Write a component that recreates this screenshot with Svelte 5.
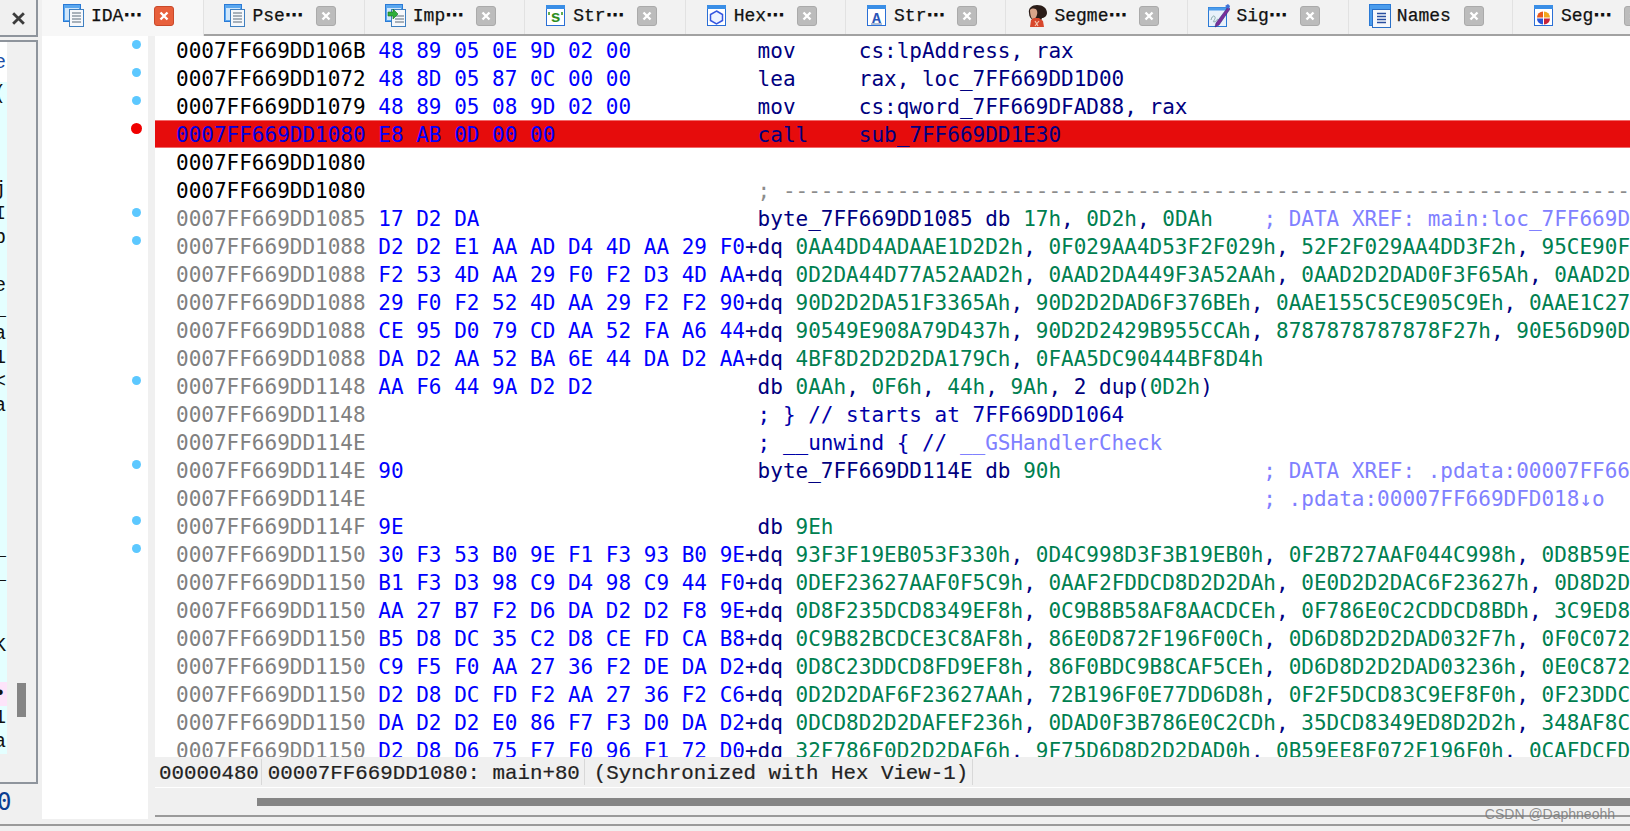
<script>
  const tabs = [
    { t: 'IDA', more: true, icon: 'doc', active: true },
    { t: 'Pse', more: true, icon: 'doc' },
    { t: 'Imp', more: true, icon: 'imp' },
    { t: 'Str', more: true, icon: 'sq' },
    { t: 'Hex', more: true, icon: 'hex' },
    { t: 'Str', more: true, icon: 'a' },
    { t: 'Segme', more: true, icon: 'face' },
    { t: 'Sig', more: true, icon: 'pen' },
    { t: 'Names', more: false, icon: 'names' },
    { t: 'Seg', more: true, icon: 'pie' }
  ];

  const P = '0007FF669DD';
  const INSTR_W = 40;

  function vals(s) {
    return s.split(/(, )/).map((x) => (x === ', ' ? ['n', x] : ['v', x]));
  }
  function row(addr, dark, bytes, parts, comment, mark) {
    const len = parts.reduce((a, p) => a + p[1].length, 0);
    const segs = [
      [dark ? 'k' : 'g', P + addr + ' '],
      ['b', bytes.padEnd(30).slice(0, 29)],
      ['n', bytes.length > 29 ? '+' : ' '],
      ...parts
    ];
    if (comment) segs.push(['c', ' '.repeat(Math.max(0, INSTR_W - len)) + comment]);
    return { segs, mark };
  }
  function dq(addr, bytes, s) {
    return row(addr, false, bytes + '+', [['n', 'dq '], ...vals(s)], null, null);
  }

  const rows = [
    row('106B', true, '48 89 05 0E 9D 02 00', [['n', 'mov     cs:lpAddress, rax']], null, 'blue'),
    row('1072', true, '48 8D 05 87 0C 00 00', [['n', 'lea     rax, loc_7FF669DD1D00']], null, 'blue'),
    row('1079', true, '48 89 05 08 9D 02 00', [['n', 'mov     cs:qword_7FF669DFAD88, rax']], null, 'blue'),
    { ...row('1080', false, 'E8 AB 0D 00 00', [['n', 'call    sub_7FF669DD1E30']], null, 'red'), hit: true },
    row('1080', true, '', []),
    row('1080', true, '', [['d', '; ' + '-'.repeat(70)]]),
    row('1085', false, '17 D2 DA', [['n', 'byte_7FF669DD1085 db '], ...vals('17h, 0D2h, 0DAh')], '; DATA XREF: main:loc_7FF669D', 'blue'),
    { ...dq('1088', 'D2 D2 E1 AA AD D4 4D AA 29 F0', '0AA4DD4ADAAE1D2D2h, 0F029AA4D53F2F029h, 52F2F029AA4DD3F2h, 95CE90F'), mark: 'blue' },
    dq('1088', 'F2 53 4D AA 29 F0 F2 D3 4D AA', '0D2DA44D77A52AAD2h, 0AAD2DA449F3A52AAh, 0AAD2D2DAD0F3F65Ah, 0AAD2D'),
    dq('1088', '29 F0 F2 52 4D AA 29 F2 F2 90', '90D2D2DA51F3365Ah, 90D2D2DAD6F376BEh, 0AAE155C5CE905C9Eh, 0AAE1C27'),
    dq('1088', 'CE 95 D0 79 CD AA 52 FA A6 44', '90549E908A79D437h, 90D2D2429B955CCAh, 8787878787878F27h, 90E56D90D'),
    dq('1088', 'DA D2 AA 52 BA 6E 44 DA D2 AA', '4BF8D2D2D2DA179Ch, 0FAA5DC90444BF8D4h'),
    row('1148', false, 'AA F6 44 9A D2 D2', [['n', 'db '], ...vals('0AAh, 0F6h, 44h, 9Ah'), ['n', ', 2 dup('], ['v', '0D2h'], ['n', ')']], null, 'blue'),
    row('1148', false, '', [['i', '; } // starts at 7FF669DD1064']]),
    row('114E', false, '', [['i', '; __unwind { // '], ['c', '__GSHandlerCheck']]),
    row('114E', false, '90', [['n', 'byte_7FF669DD114E db '], ['v', '90h']], '; DATA XREF: .pdata:00007FF66', 'blue'),
    row('114E', false, '', [], '; .pdata:00007FF669DFD018↓o'),
    row('114F', false, '9E', [['n', 'db '], ['v', '9Eh']], null, 'blue'),
    { ...dq('1150', '30 F3 53 B0 9E F1 F3 93 B0 9E', '93F3F19EB053F330h, 0D4C998D3F3B19EB0h, 0F2B727AAF044C998h, 0D8B59E'), mark: 'blue' },
    dq('1150', 'B1 F3 D3 98 C9 D4 98 C9 44 F0', '0DEF23627AAF0F5C9h, 0AAF2FDDCD8D2D2DAh, 0E0D2D2DAC6F23627h, 0D8D2D'),
    dq('1150', 'AA 27 B7 F2 D6 DA D2 D2 F8 9E', '0D8F235DCD8349EF8h, 0C9B8B58AF8AACDCEh, 0F786E0C2CDDCD8BDh, 3C9ED8'),
    dq('1150', 'B5 D8 DC 35 C2 D8 CE FD CA B8', '0C9B82BCDCE3C8AF8h, 86E0D872F196F00Ch, 0D6D8D2D2DAD032F7h, 0F0C072'),
    dq('1150', 'C9 F5 F0 AA 27 36 F2 DE DA D2', '0D8C23DDCD8FD9EF8h, 86F0BDC9B8CAF5CEh, 0D6D8D2D2DAD03236h, 0E0C872'),
    dq('1150', 'D2 D8 DC FD F2 AA 27 36 F2 C6', '0D2D2DAF6F23627AAh, 72B196F0E77DD6D8h, 0F2F5DCD83C9EF8F0h, 0F23DDC'),
    dq('1150', 'DA D2 D2 E0 86 F7 F3 D0 DA D2', '0DCD8D2D2DAFEF236h, 0DAD0F3B786E0C2CDh, 35DCD8349ED8D2D2h, 348AF8C'),
    dq('1150', 'D2 D8 D6 75 F7 F0 96 F1 72 D0', '32F786F0D2D2DAF6h, 9F75D6D8D2D2DAD0h, 0B59EE8F072F196F0h, 0CAFDCFD')
  ];

  const sideLines = ['(', '', '', '', 'j', 'I', 'b', '', 'e', '_', 'a', '1', '<', 'a', '', '', '', '', '', '_', '_', '', '', 'K', '', '•', '1', 'a'];
</script>

{#snippet win()}
  <rect x="1.5" y="1.5" width="18" height="20" fill="#fff" stroke="#2a6fd6" />
  <rect x="1" y="1" width="19" height="4" fill="#3a8ee6" />
{/snippet}

{#snippet doc()}
  <rect x="0.5" y="0.5" width="17" height="17" fill="#5aa7ef" stroke="#2a7ad6" />
  <rect x="2" y="4" width="14" height="12" fill="#cfe6fb" />
  <rect x="6.5" y="5.5" width="14" height="17" fill="#f6f8fb" stroke="#3f7fc0" />
{/snippet}

{#snippet icon(kind)}
  <svg class="ic" viewBox="0 0 22 24" aria-hidden="true">
    {#if kind === 'doc'}
      {@render doc()}
      <path d="M9 9h9M9 12h9M9 15h9M9 18h9" stroke="#5b6b7a" stroke-width="1.2" />
    {:else if kind === 'imp'}
      {@render doc()}
      <path d="M10 12h9M10 15h9M10 18h9" stroke="#5b6b7a" stroke-width="1.2" />
      <path d="M3 8h5V5l5 5-5 5v-3H3z" fill="#2fae3a" stroke="#176f20" stroke-width=".6" />
    {:else if kind === 'sq'}
      {@render win()}
      <text x="10.5" y="18" class="gl s">s</text>
      <path d="M4 8v3M17 8v3" stroke="#3f9a2a" stroke-width="1.6" />
    {:else if kind === 'hex'}
      {@render win()}
      <path d="M10.5 7l6 3.5v6l-6 3.5-6-3.5v-6z" fill="#eef3ff" stroke="#3456e0" stroke-width="1.5" />
    {:else if kind === 'a'}
      {@render win()}
      <text x="10.5" y="18.5" class="gl ga">A</text>
      <path d="M5 20h11" stroke="#5577aa" />
    {:else if kind === 'face'}
      <path d="M3 9c-1-5 3-8 8-8 6 0 10 3 10 8 0 3-3 5-5 5l-1 3H8C5 15 3 13 3 9z" fill="#2a1c18" />
      <path d="M4 6c2-2 6-2 7 1 1 3-1 8-4 8-2 0-3-5-3-9z" fill="#d9a58a" />
      <path d="M5 16l3-2h5l4 3 1 6H4z" fill="#d8472c" />
      <path d="M9 17l3 5M13 17l-4 5" stroke="#f3c7b0" stroke-width="1.2" />
    {:else if kind === 'pen'}
      <rect x="0.5" y="3.5" width="18" height="19" fill="#e8f1fb" stroke="#2a7ad6" />
      <rect x="0.5" y="3.5" width="18" height="3" fill="#4b9cec" />
      <path d="M3 16c1-4 3-5 4-3s-3 5-1 5 3-3 4-3" fill="none" stroke="#8aa" stroke-width="1" />
      <path d="M8 19L20 3l2 2L11 21l-4 2z" fill="#7a2f9a" stroke="#3a2a7a" stroke-width=".6" />
      <path d="M17 2l4 3 1-3-2-2z" fill="#3f6fd6" />
    {:else if kind === 'names'}
      <rect x="0.5" y="0.5" width="21" height="21" fill="#4b9cec" stroke="#2a7ad6" />
      <rect x="3.5" y="5.5" width="18" height="18" fill="#f6f8fb" stroke="#2a6fc6" />
      <path d="M8 9.5h9M8 12.5h9M8 15.5h9M8 18.5h9" stroke="#2a4fa0" stroke-width="1.3" />
    {:else}
      {@render win()}
      <path d="M10 7.5a6 6 0 0 0-6 6h6z" fill="#e8581c" />
      <path d="M11 7.5a6 6 0 0 1 6 6h-6z" fill="#f2a81e" />
      <path d="M10 14.5h-6a6 6 0 0 0 6 6z" fill="#2a55d8" />
      <path d="M11 14.5h6a6 6 0 0 1-6 6z" fill="#c8233a" />
    {/if}
  </svg>
{/snippet}

<div class="app">
  <div class="main">
    <aside class="side">
      <div class="closebox"><svg class="x" viewBox="0 0 14 14" aria-hidden="true"><path d="M2 2l10 10M12 2L2 12" stroke="#3c3c3c" stroke-width="2.6" /></svg></div>
      <div class="pane">
        <div class="lines">
          <div class="first"><span>e</span></div>
          <div class="cyan">
            {#each sideLines as l, i}
              <div class="sl" class:pink={i === 25}><span>{l}</span></div>
            {/each}
          </div>
        </div>
        <div class="track"><div class="vthumb"></div></div>
      </div>
      <div class="num">0</div>
    </aside>

    <div class="content">
      <div class="tabs">
        {#each tabs as tab}
          <div class="tab" class:active={tab.active}>
            {@render icon(tab.icon)}
            <span class="label">{tab.t}{#if tab.more}<span class="more">⋯</span>{/if}</span>
            <span class="close">
              <svg viewBox="0 0 12 12" aria-hidden="true"><path d="M2.5 2.5l7 7M9.5 2.5l-7 7" stroke="#fff" stroke-width="2.4" /></svg>
            </span>
          </div>
        {/each}
      </div>

      <div class="body">
        <div class="gutter">
          {#each rows as r}
            <div class="gr">
              {#if r.mark}<i class="dot {r.mark}"></i>{/if}
            </div>
          {/each}
        </div>
        <div class="strip"></div>
        <div class="view">
          <div class="code">
            {#each rows as r}
              <div class="row" class:hit={r.hit}>{#each r.segs as s}<span class={s[0]}>{s[1]}</span>{/each}</div>
            {/each}
          </div>
          <div class="status">
            <span class="cell">00000480</span>
            <span class="cell">00007FF669DD1080: main+80</span>
            <span class="cell">(Synchronized with Hex View-1)</span>
          </div>
          <div class="hscroll"><div class="hthumb"></div></div>
        </div>
      </div>
    </div>
  </div>
  <div class="foot"></div>
  <div class="mark">CSDN @Daphneohh</div>
</div>

<style>
  :global(body) {
    margin: 0;
    background: #f0f0f0;
  }
  .app {
    position: relative;
    width: 1630px;
    height: 831px;
    overflow: hidden;
    background: #f0f0f0;
    display: flex;
    flex-direction: column;
  }
  .main {
    display: flex;
    height: 824px;
  }

  /* left dock */
  .side {
    width: 42px;
    flex: none;
    display: flex;
    flex-direction: column;
  }
  .closebox {
    box-sizing: border-box;
    width: 38px;
    height: 37px;
    border-right: 2px solid #8e949c;
    border-bottom: 2px solid #8e949c;
    display: flex;
    align-items: center;
    justify-content: flex-end;
    padding-right: 10px;
    padding-top: 1px;
  }
  .x {
    width: 15px;
    height: 15px;
  }
  .pane {
    box-sizing: border-box;
    width: 38px;
    height: 744px;
    margin-top: 3px;
    border-top: 2px solid #8e949c;
    border-right: 2px solid #8e949c;
    border-bottom: 2px solid #8e949c;
    display: flex;
  }
  .lines {
    width: 7px;
    flex: none;
    overflow: hidden;
    font: 20px/24px "Liberation Mono", monospace;
    color: #111;
  }
  .first {
    height: 40px;
    background: #fff;
    line-height: 42px;
    color: #1c4fa8;
  }
  .cyan {
    background: #e4ffff;
  }
  .sl {
    height: 24px;
    white-space: nowrap;
  }
  .sl span,
  .first span {
    margin-left: -6px;
    display: inline-block;
  }
  .pink {
    background: #fde4fa;
  }
  .track {
    padding-left: 10px;
    padding-top: 641px;
  }
  .vthumb {
    width: 9px;
    height: 34px;
    background: #858585;
  }
  .num {
    margin-top: 0;
    font: 24px/36px "DejaVu Sans Mono", monospace;
    color: #0b3d91;
    margin-left: -3px;
  }

  /* tab strip */
  .tabs {
    box-sizing: border-box;
    height: 36px;
    display: flex;
    border-bottom: 2px solid #a2a2a2;
    background: #f2f2f2;
    overflow: visible;
  }
  .tab {
    box-sizing: border-box;
    flex: none;
    height: 34px;
    padding: 0 28px 3px 20px;
    display: flex;
    align-items: center;
    border-right: 1px solid #e2e2e2;
    font: 18px/24px "Liberation Mono", monospace;
    color: #111;
  }
  .tab.active {
    height: 36px;
    background: #f7f7f7;
    padding: 0 29px 5px 21px;
  }
  .ic {
    width: 22px;
    height: 24px;
    flex: none;
    margin-right: 6px;
  }
  .label {
    white-space: nowrap;
    -webkit-text-stroke: 0.25px #111;
  }
  .more {
    font-family: "DejaVu Sans", sans-serif;
    font-size: 18px;
    font-weight: 700;
    -webkit-text-stroke: 0;
  }
  .close {
    flex: none;
    width: 20px;
    height: 20px;
    margin-left: 13px;
    border-radius: 3px;
    background: #bcbcbc;
    border: 1px solid #aaa;
    box-sizing: border-box;
    display: flex;
    align-items: center;
    justify-content: center;
  }
  .close svg {
    width: 12px;
    height: 12px;
  }
  .active .close {
    background: #e8603c;
    border-color: #c9492a;
  }
  .gl {
    font-family: "Liberation Mono", monospace;
    font-weight: 700;
    text-anchor: middle;
  }
  .s {
    font-size: 17px;
    fill: #2f8f1f;
  }
  .ga {
    font-size: 15px;
    fill: #2a55b8;
  }

  /* body */
  .body {
    display: flex;
    height: 788px;
  }
  .gutter {
    width: 106px;
    height: 783px;
    flex: none;
    background: #fff;
    overflow: hidden;
  }
  .gr {
    height: 28px;
    display: flex;
    justify-content: flex-end;
    padding: 4px 7px 0 0;
    box-sizing: border-box;
  }
  .dot {
    width: 9px;
    height: 9px;
    border-radius: 50%;
    background: #5cc8ff;
  }
  .dot.red {
    width: 11px;
    height: 11px;
    margin: -1px -1px 0 0;
    background: #f00000;
  }
  .strip {
    width: 7px;
    flex: none;
  }
  .view {
    flex: 1;
    min-width: 0;
    display: flex;
    flex-direction: column;
  }
  .code {
    height: 721px;
    flex: none;
    background: #fff;
    overflow: hidden;
    font: 21px/30px "DejaVu Sans Mono", monospace;
    white-space: pre;
  }
  .row {
    height: 28px;
    padding-left: 21px;
  }
  .row.hit {
    background: #e60c0c;
    box-shadow: inset 0 1px 0 #f26a6a, inset 0 -1px 0 #f26a6a;
  }
  .k { color: #000; }
  .g { color: #808080; }
  .hit .g { color: #0000e0; }
  .b { color: #0000ff; }
  .n { color: #000080; }
  .i { color: #0000a8; }
  .v { color: #008050; }
  .c { color: #8080ff; }
  .d { color: #8c8c8c; }

  .status {
    height: 31px;
    flex: none;
    display: flex;
    align-items: center;
    padding-left: 4px;
    box-sizing: border-box;
    font: 20.8px/31px "Liberation Mono", monospace;
    color: #222;
    border-bottom: 1px solid #fff;
  }
  .cell {
    padding-right: 4px;
    margin-right: 9px;
    border-right: 1px solid #d8d8d8;
    white-space: nowrap;
    height: 26px;
    line-height: 30px;
    -webkit-text-stroke: 0.2px #222;
  }
  .cell:first-child {
    padding-right: 2px;
    margin-right: 6px;
  }
  .hscroll {
    box-sizing: border-box;
    height: 29px;
    padding: 10px 0 0 102px;
    border-bottom: 2px solid #9a9a9a;
  }
  .hthumb {
    height: 8px;
    background: #858585;
  }

  .foot {
    height: 2px;
    background: #9a9a9a;
    flex: none;
  }
  .mark {
    position: absolute;
    right: 15px;
    top: 805px;
    font: 14px/18px "Liberation Sans", sans-serif;
    color: rgba(120, 120, 120, 0.85);
  }
</style>
